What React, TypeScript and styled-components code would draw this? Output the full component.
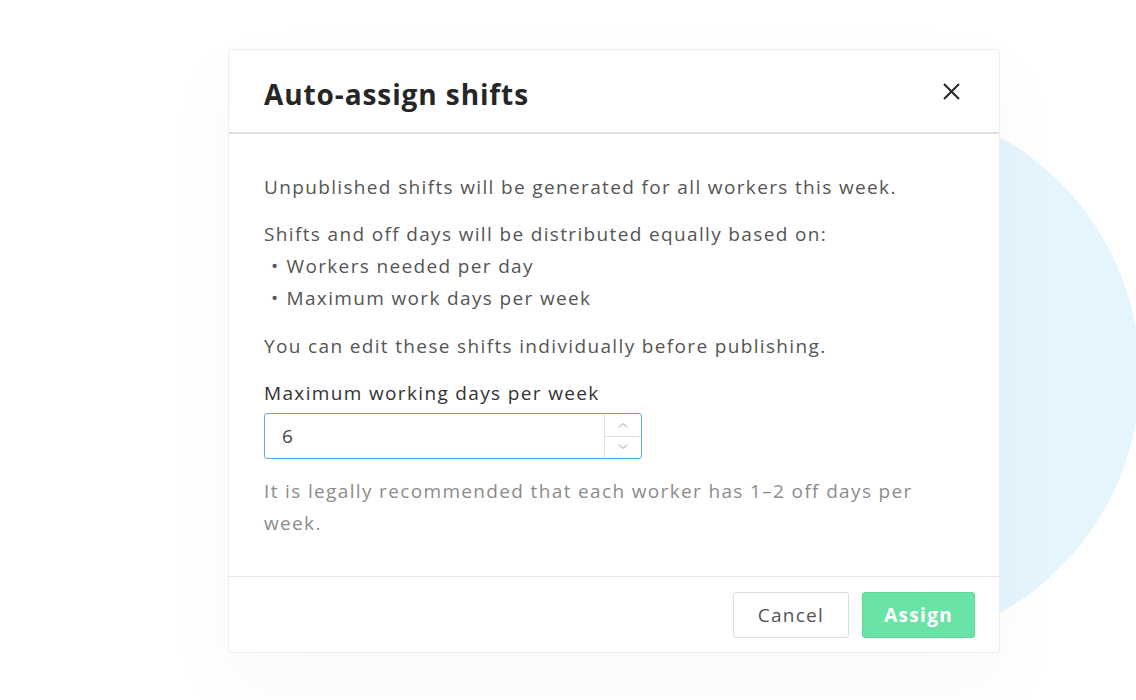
import styled, { createGlobalStyle } from 'styled-components';

const GlobalStyle = createGlobalStyle`
  html, body {
    margin: 0;
    padding: 0;
    background: #ffffff;
  }

  body {
    font-family: 'Open Sans', 'Liberation Sans', sans-serif;
    -webkit-font-smoothing: antialiased;
  }
`;

const Stage = styled.div`
  position: relative;
  width: 1136px;
  height: 700px;
  overflow: hidden;
  padding: 49px 0 0 228px;
  box-sizing: border-box;
  background: #ffffff;
`;

const BackdropCircle = styled.div`
  position: absolute;
  left: 596px;
  top: 103px;
  width: 544px;
  height: 544px;
  border-radius: 50%;
  background: #e4f5fd;
  z-index: 0;
`;

const Modal = styled.section`
  position: relative;
  z-index: 1;
  display: flex;
  flex-direction: column;
  width: 772px;
  background: #ffffff;
  border: 1px solid #ececec;
  border-radius: 3px;
  box-sizing: border-box;
  box-shadow: 0 30px 80px 10px rgba(0, 0, 0, 0.025);
`;

const Header = styled.header`
  display: flex;
  align-items: center;
  justify-content: space-between;
  height: 84px;
  padding: 5px 40px 0 35px;
  border-bottom: 2px solid #e0e0e0;
  box-sizing: border-box;
`;

const Title = styled.h2`
  margin: 0;
  font-size: 28px;
  font-weight: 700;
  color: #262626;
  letter-spacing: 0.9px;
`;

const CloseButton = styled.button`
  display: flex;
  align-items: center;
  justify-content: center;
  width: 20px;
  height: 20px;
  margin: -4px -2px 0 0;
  padding: 0;
  border: none;
  background: none;
  cursor: pointer;
`;

const Body = styled.div`
  display: flex;
  flex-direction: column;
  padding: 37px 35px 37px;
  border-bottom: 1px solid #e6e6e6;
  font-size: 19px;
  line-height: 32px;
  letter-spacing: 1.35px;
  color: #555555;
`;

const Paragraph = styled.p`
  margin: 0 0 15px;
`;

const BulletList = styled.ul`
  margin: 0 0 16px;
  padding: 0 0 0 7px;
  list-style: none;
`;

const Bullet = styled.li`
  &::before {
    content: '•';
    margin-right: 7px;
  }
`;

const Label = styled.label`
  display: block;
  margin-bottom: 4px;
  color: #333333;
`;

const NumberField = styled.div`
  display: flex;
  width: 378px;
  height: 46px;
  border: 1px solid #59aee8;
  border-radius: 3px;
  box-sizing: border-box;
  overflow: hidden;
`;

const NumberValue = styled.div`
  flex: 1;
  display: flex;
  align-items: center;
  padding-left: 17px;
  color: #444444;
`;

const Stepper = styled.div`
  display: flex;
  flex-direction: column;
  width: 36px;
  border-left: 1px solid #e2e2e2;
`;

const StepButton = styled.div<{ $top?: boolean }>`
  flex: 1;
  display: flex;
  align-items: center;
  justify-content: center;
  border-bottom: ${(p) => (p.$top ? '1px solid #e2e2e2' : 'none')};
`;

const Helper = styled.p`
  margin: 16px 0 0;
  color: #8c8c8c;
`;

const Footer = styled.footer`
  display: flex;
  justify-content: flex-end;
  gap: 13px;
  padding: 15px 24px 14px;
`;

const Button = styled.button<{ $primary?: boolean }>`
  height: 46px;
  padding: 0 ${(p) => (p.$primary ? '21px' : '24px')};
  border-radius: 3px;
  border: 1px solid ${(p) => (p.$primary ? '#5fd99a' : '#dcdcdc')};
  background: ${(p) => (p.$primary ? '#6ae4a6' : '#ffffff')};
  color: ${(p) => (p.$primary ? '#ffffff' : '#555555')};
  font-family: inherit;
  font-size: 19px;
  letter-spacing: 1.3px;
  font-weight: ${(p) => (p.$primary ? 700 : 400)};
  cursor: pointer;
`;

const Chevron = ({ up }: { up?: boolean }) => (
  <svg width="10" height="6" viewBox="0 0 10 6" fill="none">
    <path
      d={up ? 'M1 5.5L5 1.5L9 5.5' : 'M1 0.5L5 4.5L9 0.5'}
      stroke="#9a9a9a"
      strokeWidth="1"
    />
  </svg>
);

const App = () => {
  return (
    <>
      <GlobalStyle />
      <Stage>
        <BackdropCircle />
        <Modal>
          <Header>
            <Title>Auto-assign shifts</Title>
            <CloseButton aria-label="Close">
              <svg width="17" height="17" viewBox="0 0 17 17" fill="none">
                <path d="M1 1L16 16M16 1L1 16" stroke="#262626" strokeWidth="2" />
              </svg>
            </CloseButton>
          </Header>
          <Body>
            <Paragraph>Unpublished shifts will be generated for all workers this week.</Paragraph>
            <div>Shifts and off days will be distributed equally based on:</div>
            <BulletList>
              <Bullet>Workers needed per day</Bullet>
              <Bullet>Maximum work days per week</Bullet>
            </BulletList>
            <Paragraph>You can edit these shifts individually before publishing.</Paragraph>
            <Label>Maximum working days per week</Label>
            <NumberField>
              <NumberValue>6</NumberValue>
              <Stepper>
                <StepButton $top>
                  <Chevron up />
                </StepButton>
                <StepButton>
                  <Chevron />
                </StepButton>
              </Stepper>
            </NumberField>
            <Helper>It is legally recommended that each worker has 1–2 off days per week.</Helper>
          </Body>
          <Footer>
            <Button>Cancel</Button>
            <Button $primary>Assign</Button>
          </Footer>
        </Modal>
      </Stage>
    </>
  );
};

export default App;
